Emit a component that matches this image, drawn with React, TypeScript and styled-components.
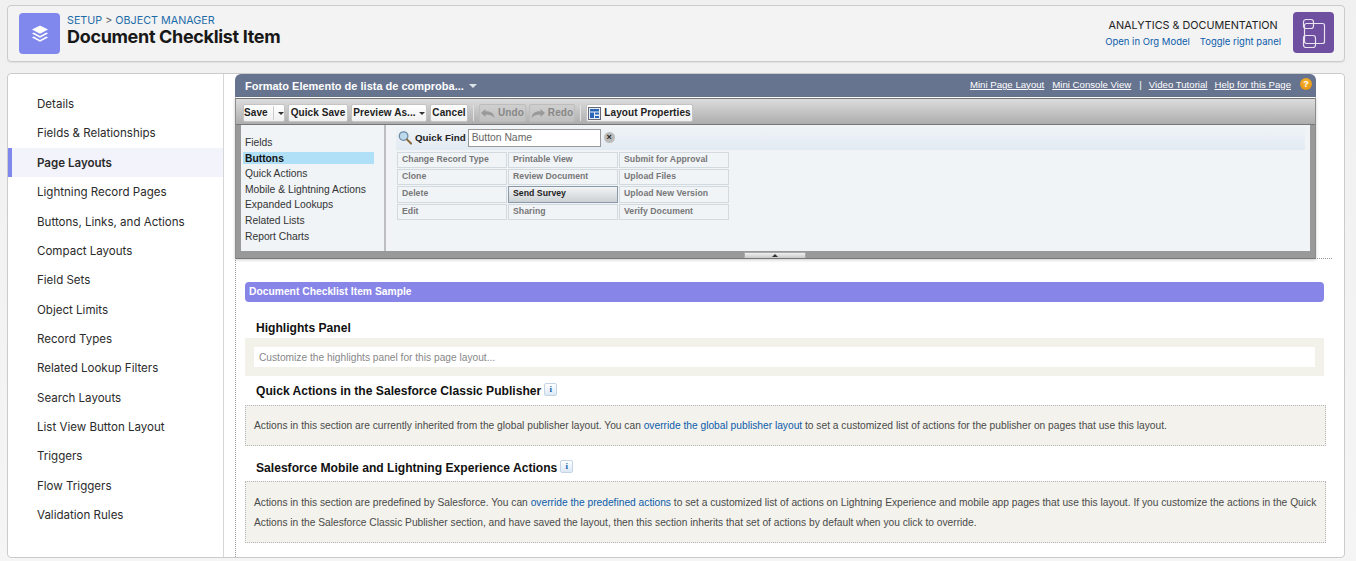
import React from "react";
import styled, { createGlobalStyle } from "styled-components";

const Global = createGlobalStyle`
  html, body { margin: 0; padding: 0; height: 100%; overflow: hidden; background: #f3f3f3; }
  * { box-sizing: border-box; }
  body { font-family: "Liberation Sans", Arial, sans-serif; }
`;
const Page = styled.div`
  width: 1356px; height: 561px; padding: 5px 11px 3px 7px; display: flex; flex-direction: column; gap: 11px;
  background: linear-gradient(#f0f0f0, #f5f5f5);
`;
const Header = styled.header`
  height: 57px; flex: none; display: flex; align-items: center; padding: 0 10px 0 11px;
  background: #f3f3f3; border: 1px solid #cbcbcb; border-radius: 4px; box-shadow: 0 1px 1px rgba(0,0,0,.06);
`;
const IconTile = styled.div<{ $bg: string }>`
  width: 41px; height: 41px; border-radius: 4px; background: ${(p) => p.$bg}; display: flex; align-items: center; justify-content: center; flex: none;
`;
const RaisedTile = styled(IconTile)`
  margin-top: -2px;
`;
const TitleBlock = styled.div`
  margin-left: 7px; flex: 1; display: flex; flex-direction: column; margin-top: -6px;
`;
const Crumbs = styled.div`
  font: 400 10.75px/14px Inter, sans-serif; color: #666;
`;
const CrumbLink = styled.span`
  color: #1b6ba8;
`;
const Title = styled.h1`
  margin: -2px 0 0; font: 700 18px/21px Inter, sans-serif; color: #181818; letter-spacing: -0.33px;
`;
const RightBlock = styled.div`
  display: flex; flex-direction: column; align-items: center; margin-right: 12px; margin-top: -1px;
`;
const RightTitle = styled.div`
  font: 400 10.8px/15px Inter, sans-serif; color: #222;
`;
const RightLinks = styled.div`
  display: flex; gap: 10px; font: 400 9.5px/15px Inter, sans-serif; color: #0b5cab; margin-top: 1px;
`;
const Main = styled.main`
  flex: 1; min-height: 0; display: flex; background: #fff; border: 1px solid #cbcbcb; border-radius: 4px; overflow: hidden;
`;
const Sidebar = styled.nav`
  width: 216px; flex: none; border-right: 1px solid #d6d6d6; padding-top: 15.4px;
`;
const NavItem = styled.div<{ $active?: boolean }>`
  height: 29.36px; display: flex; align-items: center; padding-left: ${(p) => (p.$active ? "25px" : "29px")};
  font: ${(p) => (p.$active ? 600 : 400)} 11.55px Inter, sans-serif; color: #2b2b2b;
  ${(p) => p.$active && "background: #f3f3fb; border-left: 4px solid #8088ee;"}
`;
const Content = styled.div`
  flex: 1; min-width: 0; padding: 0 0 0 11px; display: flex; flex-direction: column;
`;
const Editor = styled.section`
  width: 1081px; flex: none; position: relative; z-index: 1; margin-bottom: -1px;
`;
const EditorBar = styled.div`
  height: 23px; background: #67748f; border-radius: 6px 6px 0 0; display: flex; align-items: center; padding: 0 4px 0 10px; color: #fff;
`;
const EditorTitle = styled.div`
  flex: 1; font: 700 11px "Liberation Sans", sans-serif; display: flex; align-items: center; gap: 5px;
`;
const Caret = styled.span<{ $color?: string; $size?: number }>`
  display: inline-block; width: 0; height: 0; border-left: ${(p) => p.$size ?? 4}px solid transparent; border-right: ${(p) => p.$size ?? 4}px solid transparent;
  border-top: ${(p) => p.$size ?? 4}px solid ${(p) => p.$color ?? "#333"};
`;
const BarLinks = styled.div`
  display: flex; align-items: center; font: 400 9.65px "Liberation Sans", sans-serif; margin-top: -3px;
`;
const BarLink = styled.a<{ $gap?: number }>`
  text-decoration: underline; color: #fff; margin-left: ${(p) => p.$gap ?? 0}px;
`;
const BarSep = styled.span`
  margin-left: 8px;
`;
const HelpDot = styled.span`
  width: 12px; height: 12px; margin-left: 9px; border-radius: 50%; background: radial-gradient(circle at 50% 35%, #f7b733, #e08a0c);
  color: #fff; font: 700 9px/12px "Liberation Sans", sans-serif; text-align: center;
`;
const EditorBody = styled.div`
  height: 162px; background: #999; border: 1px solid #8c8c8c; border-top: 1px solid #fff; border-bottom: 1.5px solid #777; box-shadow: 0 1px 3px rgba(0,0,0,.2);
  padding: 0 5px 7px 5px; display: flex; flex-direction: column;
  position: relative;
`;
const Toolbar = styled.div`
  height: 27px; margin: 0 -5px; padding: 5px 0 0 7px; display: flex; align-items: flex-start; gap: 3px; flex: none;
  background: linear-gradient(#dcdcdc, #adadad); border-top: 1px solid #777; border-bottom: 1px solid #777;
`;
const ToolButton = styled.button<{ $w: number; $disabled?: boolean }>`
  width: ${(p) => p.$w}px; height: 18px; padding: 0; border: 1px solid ${(p) => (p.$disabled ? "#bdbdbd" : "#c4c4c4")}; border-radius: 2px;
  background: ${(p) => (p.$disabled ? "linear-gradient(#cfcfcf, #c0c0c0)" : "linear-gradient(#fff, #f0f0f0)")};
  color: ${(p) => (p.$disabled ? "#888" : "#222")}; font: 700 10px/16px "Liberation Sans", sans-serif; letter-spacing: .08px;
  display: flex; align-items: center; justify-content: center; gap: 3px; flex: none;
`;
const SplitMark = styled.span`
  width: 1px; height: 14px; background: #ccc; margin: 0 2px;
`;
const ToolSep = styled.span`
  width: 1px; height: 16px; background: #e2e2e2; margin: 1px 2px 0 2px; flex: none;
`;
const Panes = styled.div`
  flex: 1; min-height: 0; display: flex; background: #bcbec2;
`;
const ListPane = styled.div`
  width: 143px; flex: none; background: #f0f4f7; padding: 10px 0 0 2px; font: 400 10.3px/15.6px "Liberation Sans", sans-serif; color: #333;
`;
const ListItem = styled.div<{ $active?: boolean }>`
  width: 131px; padding-left: 2px; height: 15.6px; display: flex; align-items: center;
  ${(p) => p.$active && "font-weight: 700; color: #111; background: linear-gradient(#b0dff8, #b0dff8) 0 50%/100% 12px no-repeat;"}
`;
const GridPane = styled.div`
  flex: 1; margin-left: 2px; background: #f0f4f7; padding: 0 5px 0 0; display: flex; flex-direction: column;
`;
const FindRow = styled.div`
  height: 25px; margin-left: 10px; padding-left: 2px; display: flex; align-items: center; flex: none; background: linear-gradient(#f0f4f7, #e2eaf2);
`;
const FindLabel = styled.span`
  font: 700 9.8px "Liberation Sans", sans-serif; color: #222; margin-left: 3px;
`;
const FindInput = styled.div`
  width: 133px; height: 18px; margin-left: 2px; background: #fff; border: 1px solid #999; font: 400 10.35px/16px "Liberation Sans", sans-serif; color: #666; padding-left: 3px;
`;
const ClearDot = styled.span`
  width: 11px; height: 11px; margin-left: 3px; border-radius: 50%; background: #bbb; color: #222; font: 700 9px/11px "Liberation Sans", sans-serif; text-align: center;
`;
const Cells = styled.div`
  display: grid; grid-template-columns: repeat(3, 110px); gap: 1px; margin: 1.5px 0 0 11px;
`;
const Cell = styled.div<{ $h: number; $on?: boolean }>`
  height: ${(p) => p.$h}px; border: 1px solid ${(p) => (p.$on ? "#8a9aa8" : "#d3dadf")}; padding-left: 4px;
  font: 700 8.7px/${(p) => p.$h - 4}px "Liberation Sans", sans-serif; letter-spacing: .03px; color: ${(p) => (p.$on ? "#222" : "#777")};
  ${(p) => p.$on && "background: linear-gradient(#f2f4f5, #ccd1d5);"}
`;
const Handle = styled.div`
  position: absolute; left: 508px; bottom: 0; width: 62px; height: 6px; background: linear-gradient(#f0f0f0, #c8c8c8); border: 1px solid #aaa; border-bottom: 0;
  display: flex; align-items: center; justify-content: center;
`;
const UpCaret = styled.span`
  width: 0; height: 0; border-left: 3px solid transparent; border-right: 3px solid transparent; border-bottom: 3px solid #333;
`;
const Canvas = styled.div`
  width: 1097px; flex: 1; border-left: 1px dotted #999; border-top: 1px dotted #999; padding: 23px 6px 0 9px;
`;
const SampleBar = styled.div`
  width: 1079px; height: 20px; background: #8885e8; border-radius: 4px; padding-left: 4px; font: 700 10.3px/20px "Liberation Sans", sans-serif; color: #fff;
`;
const SectionTitle = styled.h2<{ $top: number; $bottom: number }>`
  margin: ${(p) => p.$top}px 0 ${(p) => p.$bottom}px 11px; display: flex; align-items: center; gap: 3px;
  font: 700 12.1px/16px "Liberation Sans", sans-serif; color: #111;
`;
const InfoBadge = styled.span`
  width: 13px; height: 13px; margin-top: -3px; background: linear-gradient(#fff, #dce8f5); border: 1px solid #c5d5e6; border-radius: 2px;
  font: 700 9px/11px "Liberation Serif", serif; color: #1b5fb0; text-align: center;
`;
const HighlightBand = styled.div`
  width: 1079px; height: 38px; background: #f3f2ea; padding: 9px;
`;
const HighlightInput = styled.div`
  height: 20px; background: #fff; padding-left: 5px; font: 400 10.2px/21px "Liberation Sans", sans-serif; color: #888;
`;
const NoteBox = styled.div<{ $pad: string }>`
  width: 1081px; background: #f3f2ec; border: 1px dotted #b4b4b4; padding: ${(p) => p.$pad}; font: 400 10.23px/20px "Liberation Sans", sans-serif; color: #4a4a4a;
`;
const NoteLink = styled.a`
  color: #0b5cab;
`;

const nav = ["Details","Fields & Relationships","Page Layouts","Lightning Record Pages","Buttons, Links, and Actions","Compact Layouts","Field Sets","Object Limits","Record Types","Related Lookup Filters","Search Layouts","List View Button Layout","Triggers","Flow Triggers","Validation Rules"];
const lists = ["Fields","Buttons","Quick Actions","Mobile & Lightning Actions","Expanded Lookups","Related Lists","Report Charts"];
const cells = ["Change Record Type","Printable View","Submit for Approval","Clone","Review Document","Upload Files","Delete","Send Survey","Upload New Version","Edit","Sharing","Verify Document"];
const heights = [16, 16, 17, 16];

const LayersIcon = () => (
  <svg width="20" height="20" viewBox="0 0 20 20" fill="#fff">
    <path d="M10 1.5 18 5.6 10 9.7 2 5.6Z" />
    <path d="M3.6 8.6 10 11.9 16.4 8.6 18 9.6 10 13.7 2 9.6Z" />
    <path d="M3.6 12.6 10 15.9 16.4 12.6 18 13.6 10 17.7 2 13.6Z" />
  </svg>
);
const ModelIcon = () => (
  <svg width="28" height="30" viewBox="0 0 28 30" fill="none" stroke="#fff" strokeWidth="1.2" opacity=".85">
    <rect x="4.5" y="5.5" width="20" height="20" rx="2" />
    <rect x="3.5" y="1.5" width="10" height="9" rx="2.5" />
    <rect x="3.5" y="17.5" width="12" height="12" rx="2.5" />
  </svg>
);
const Undo = () => (
  <svg width="14" height="11" viewBox="0 0 14 11" fill="#9a9a9a"><path d="M0 5 4.5 1v2.4C9 3 13 5 13.5 10 11 7 8 6.4 4.5 6.8V9Z" /></svg>
);
const Redo = () => (
  <svg width="14" height="11" viewBox="0 0 14 11" fill="#9a9a9a"><path d="M14 5 9.5 1v2.4C5 3 1 5 .5 10 3 7 6 6.4 9.5 6.8V9Z" /></svg>
);
const LayoutIcon = () => (
  <svg width="13" height="13" viewBox="0 0 13 13">
    <rect x=".5" y=".5" width="12" height="12" fill="#e8eef5" stroke="#667" />
    <rect x="2" y="2" width="9" height="2.5" fill="#2a66b8" />
    <rect x="2" y="5.5" width="4" height="5.5" fill="#2a66b8" />
    <rect x="7" y="5.5" width="4" height="2" fill="#2a66b8" />
    <rect x="7" y="9" width="4" height="2" fill="#2a66b8" />
  </svg>
);
const Magnifier = () => (
  <svg width="14" height="15" viewBox="0 0 15 15">
    <circle cx="6" cy="6" r="4.6" fill="#bcd9ee" stroke="#6d8ca6" strokeWidth="1.4" />
    <path d="M9.5 9.5 14 14" stroke="#8a6a3a" strokeWidth="2.2" strokeLinecap="round" />
  </svg>
);

export default function App() {
  return (
    <Page>
      <Global />
      <Header>
        <IconTile $bg="#8088ee"><LayersIcon /></IconTile>
        <TitleBlock>
          <Crumbs><CrumbLink>SETUP</CrumbLink> &gt; <CrumbLink>OBJECT MANAGER</CrumbLink></Crumbs>
          <Title>Document Checklist Item</Title>
        </TitleBlock>
        <RightBlock>
          <RightTitle>ANALYTICS &amp; DOCUMENTATION</RightTitle>
          <RightLinks><span>Open in Org Model</span><span>Toggle right panel</span></RightLinks>
        </RightBlock>
        <RaisedTile $bg="#6f4f9f"><ModelIcon /></RaisedTile>
      </Header>
      <Main>
        <Sidebar>
          {nav.map((n) => <NavItem key={n} $active={n === "Page Layouts"}>{n}</NavItem>)}
        </Sidebar>
        <Content>
          <Editor>
            <EditorBar>
              <EditorTitle>Formato Elemento de lista de comproba... <Caret $color="#dfe3ea" /></EditorTitle>
              <BarLinks>
                <BarLink>Mini Page Layout</BarLink>
                <BarLink $gap={8}>Mini Console View</BarLink>
                <BarSep>|</BarSep>
                <BarLink $gap={7}>Video Tutorial</BarLink>
                <BarLink $gap={7}>Help for this Page</BarLink>
                <HelpDot>?</HelpDot>
              </BarLinks>
            </EditorBar>
            <EditorBody>
              <Toolbar>
                <ToolButton $w={42}>Save<SplitMark /><Caret $size={3} /></ToolButton>
                <ToolButton $w={60}>Quick Save</ToolButton>
                <ToolButton $w={76}>Preview As...<Caret $size={3} /></ToolButton>
                <ToolButton $w={38}>Cancel</ToolButton>
                <ToolSep />
                <ToolButton $w={47} $disabled><Undo />Undo</ToolButton>
                <ToolButton $w={46} $disabled><Redo />Redo</ToolButton>
                <ToolSep />
                <ToolButton $w={107}><LayoutIcon />Layout Properties</ToolButton>
              </Toolbar>
              <Panes>
                <ListPane>
                  {lists.map((l) => <ListItem key={l} $active={l === "Buttons"}>{l}</ListItem>)}
                </ListPane>
                <GridPane>
                  <FindRow>
                    <Magnifier />
                    <FindLabel>Quick Find</FindLabel>
                    <FindInput>Button Name</FindInput>
                    <ClearDot>×</ClearDot>
                  </FindRow>
                  <Cells>
                    {cells.map((c, i) => (
                      <Cell key={c} $h={heights[Math.floor(i / 3)]} $on={c === "Send Survey"}>{c}</Cell>
                    ))}
                  </Cells>
                </GridPane>
              </Panes>
              <Handle><UpCaret /></Handle>
            </EditorBody>
          </Editor>
          <Canvas>
            <SampleBar>Document Checklist Item Sample</SampleBar>
            <SectionTitle $top={18} $bottom={2}>Highlights Panel</SectionTitle>
            <HighlightBand><HighlightInput>Customize the highlights panel for this page layout...</HighlightInput></HighlightBand>
            <SectionTitle $top={7} $bottom={6}>Quick Actions in the Salesforce Classic Publisher<InfoBadge>i</InfoBadge></SectionTitle>
            <NoteBox $pad="9.5px 8px">Actions in this section are currently inherited from the global publisher layout. You can <NoteLink>override the global publisher layout</NoteLink> to set a customized list of actions for the publisher on pages that use this layout.</NoteBox>
            <SectionTitle $top={14} $bottom={5}>Salesforce Mobile and Lightning Experience Actions<InfoBadge>i</InfoBadge></SectionTitle>
            <NoteBox $pad="11px 8px 9px">Actions in this section are predefined by Salesforce. You can <NoteLink>override the predefined actions</NoteLink> to set a customized list of actions on Lightning Experience and mobile app pages that use this layout. If you customize the actions in the Quick Actions in the Salesforce Classic Publisher section, and have saved the layout, then this section inherits that set of actions by default when you click to override.</NoteBox>
          </Canvas>
        </Content>
      </Main>
    </Page>
  );
}
